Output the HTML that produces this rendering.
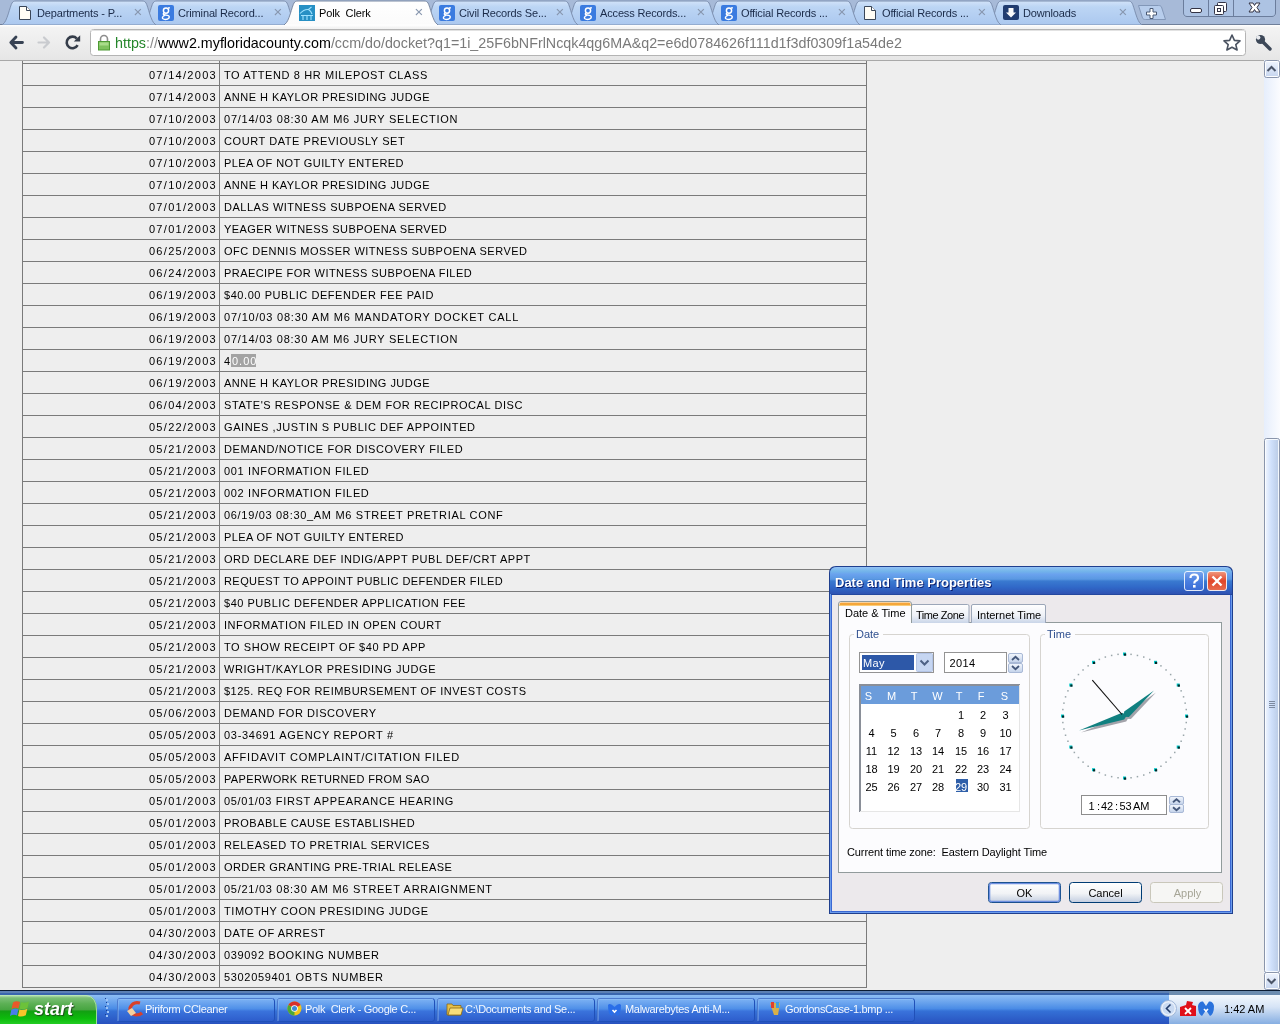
<!DOCTYPE html><html><head><meta charset="utf-8"><style>*{margin:0;padding:0;box-sizing:border-box}
html,body{-webkit-font-smoothing:antialiased;width:1280px;height:1024px;overflow:hidden;background:#eee;font-family:"Liberation Sans",sans-serif;position:relative}
.strip{position:absolute;left:0;top:0}
.fav{position:absolute;top:5px;width:16px;height:16px}
.fav-g{background:#3b7ddd;border-radius:2px}
.fav-g::after{content:"g";position:absolute;left:3px;top:-3px;color:#fff;font:bold 15px "Liberation Serif",serif}
.fav-page{top:6px;left:0;width:12px;height:14px;border:1px solid #3e4a5c;background:#fffdf7;margin-left:3px}
.fav-polk{background:#2a92c6}
.fav-dl{background:#2a4a86;border-radius:2px}
.ttl{position:absolute;top:6px;font-size:11px;color:#1a2a48;white-space:pre;line-height:14px;letter-spacing:-0.15px}
.ttl.act{color:#000}
.tclose{position:absolute;top:4px;width:12px;text-align:center;font-size:15px;line-height:16px;color:#8796ae}
#toolbar{position:absolute;left:0;top:25px;width:1280px;height:36px;background:linear-gradient(#ffffff 0,#f3f3f3 8%,#ececec 60%,#e6e6e6 100%);border-bottom:1px solid #a8a8a8}
#page{position:absolute;left:0;top:61px;width:1264px;height:929px;background:#eeeeee;overflow:hidden}
.hl{position:absolute;left:22px;width:845px;height:1px;background:#7a7a7a}
.vl{position:absolute;top:0;width:1px;height:927px;background:#7a7a7a}
.dt{position:absolute;left:22px;width:195px;text-align:right;font-size:11px;letter-spacing:1.3px;line-height:22px;height:22px;color:#000;padding-top:1px}
.tx{position:absolute;left:224px;font-size:11px;letter-spacing:0.5px;line-height:22px;height:22px;color:#000;white-space:pre;padding-top:1px}
.sel{background:#a3a3a3;color:#fff}
#url{position:absolute;left:115px;top:35px;font-size:14.3px;line-height:17px;color:#000;white-space:pre}
#dlg{position:absolute;left:0;top:0;width:0;height:0}
.dtx{position:absolute;font-size:11px;line-height:13px;color:#000;white-space:pre}
.dttl{position:absolute;font-size:13px;font-weight:bold;line-height:16px;color:#fff;white-space:pre;text-shadow:1px 1px 0 #0a1e6e}
.tbt{position:absolute;top:1002px;font-size:11px;line-height:14px;color:#f4f8ff;white-space:pre;letter-spacing:-0.3px}
.tbs{position:absolute;left:34px;top:999px;font-size:18px;font-weight:bold;font-style:italic;line-height:20px;color:#fff;text-shadow:1px 1px 1px #1d4d1a}
.clk{position:absolute;left:1224px;top:1002px;font-size:11px;line-height:14px;color:#000;white-space:pre}

#page,#dlg,.ttl,#url,.tbt,.clk,.tbs,.tclose{will-change:transform}
</style></head><body>

<svg class="strip" width="1280" height="25" viewBox="0 0 1280 25"><defs><linearGradient id="tabg" x1="0" y1="0" x2="0" y2="1"><stop offset="0" stop-color="#d2e3f9"/><stop offset="0.25" stop-color="#bcd5f4"/><stop offset="1" stop-color="#abc8ef"/></linearGradient><linearGradient id="tabact" x1="0" y1="0" x2="0" y2="1"><stop offset="0" stop-color="#ffffff"/><stop offset="1" stop-color="#fbfbfb"/></linearGradient></defs><rect x="0" y="0" width="1280" height="25" fill="#a7bad8"/><rect x="0" y="24" width="1280" height="1" fill="#6f7f99"/><path d="M988,25 L989,24 C993,22 996,6 998,3 C999,1.5 1000,1 1002,1 L1128,1 C1130,1 1131,1.5 1132,3 C1134,6 1137,22 1141,24 L1142,25 Z" fill="url(#tabg)" stroke="#7d90b0" stroke-width="1"/><path d="M847,25 L848,24 C852,22 855,6 857,3 C858,1.5 859,1 861,1 L987,1 C989,1 990,1.5 991,3 C993,6 996,22 1000,24 L1001,25 Z" fill="url(#tabg)" stroke="#7d90b0" stroke-width="1"/><path d="M706,25 L707,24 C711,22 714,6 716,3 C717,1.5 718,1 720,1 L846,1 C848,1 849,1.5 850,3 C852,6 855,22 859,24 L860,25 Z" fill="url(#tabg)" stroke="#7d90b0" stroke-width="1"/><path d="M565,25 L566,24 C570,22 573,6 575,3 C576,1.5 577,1 579,1 L705,1 C707,1 708,1.5 709,3 C711,6 714,22 718,24 L719,25 Z" fill="url(#tabg)" stroke="#7d90b0" stroke-width="1"/><path d="M424,25 L425,24 C429,22 432,6 434,3 C435,1.5 436,1 438,1 L564,1 C566,1 567,1.5 568,3 C570,6 573,22 577,24 L578,25 Z" fill="url(#tabg)" stroke="#7d90b0" stroke-width="1"/><path d="M143,25 L144,24 C148,22 151,6 153,3 C154,1.5 155,1 157,1 L283,1 C285,1 286,1.5 287,3 C289,6 292,22 296,24 L297,25 Z" fill="url(#tabg)" stroke="#7d90b0" stroke-width="1"/><path d="M2,25 L3,24 C7,22 10,6 12,3 C13,1.5 14,1 16,1 L142,1 C144,1 145,1.5 146,3 C148,6 151,22 155,24 L156,25 Z" fill="url(#tabg)" stroke="#7d90b0" stroke-width="1"/><path d="M284,25 L285,24 C289,22 292,6 294,3 C295,1.5 296,1 298,1 L424,1 C426,1 427,1.5 428,3 C430,6 433,22 437,24 L438,25 Z" fill="url(#tabact)" stroke="#7b8aa3" stroke-width="1"/><rect x="285" y="24" width="152" height="2" fill="#fdfdfd"/><path d="M1138.5,5.5 L1158.5,5.5 C1160,5.5 1161,6 1161.5,7 L1165.5,19.5 L1145.5,19.5 C1144,19.5 1143,19 1142.5,18 Z" fill="#b7cdec" stroke="#8297b8"/><path d="M1150,8.5 h3 v3.5 h3.5 v3 h-3.5 v3.5 h-3 v-3.5 h-3.5 v-3 h3.5 z" fill="#fff" stroke="#4a5a75" stroke-width="1"/><path d="M1183.5,0 L1183.5,13 C1183.5,15 1185,16.5 1187,16.5 L1272,16.5 C1274,16.5 1275.5,15 1275.5,13 L1275.5,0" fill="#adc3e3" stroke="#6b7d9c"/><rect x="1208" y="0" width="1" height="16" fill="#6b7d9c"/><rect x="1233" y="0" width="1" height="16" fill="#6b7d9c"/><rect x="1190.5" y="8.5" width="11" height="4" rx="1.5" fill="#fff" stroke="#334" stroke-width="1"/><rect x="1217.5" y="2.5" width="9" height="9" rx="1" fill="#fff" stroke="#334"/><rect x="1214.5" y="5.5" width="9" height="9" rx="1" fill="#fff" stroke="#334"/><rect x="1217.5" y="8.5" width="3" height="3" fill="none" stroke="#334"/><path d="M1249,3 L1253,3 L1254.5,5.5 L1256,3 L1260,3 L1257,7.5 L1260,12 L1256,12 L1254.5,9.5 L1253,12 L1249,12 L1252,7.5 Z" fill="#fff" stroke="#334" stroke-width="1"/></svg>
<svg style="position:absolute;left:17px;top:5px" width="16" height="16" viewBox="0 0 16 16"><path d="M2.5,1.5 L9.5,1.5 L13.5,5.5 L13.5,14.5 L2.5,14.5 Z" fill="#fffdf6" stroke="#3a4658"/><path d="M9.5,1.5 L9.5,5.5 L13.5,5.5" fill="#fff" stroke="#3a4658"/></svg>
<div class="ttl" style="left:37px">Departments - P...</div>
<div class="tclose" style="left:132px">&#215;</div>
<svg style="position:absolute;left:158px;top:5px" width="16" height="16" viewBox="0 0 16 16"><rect x="0" y="0" width="16" height="16" rx="2" fill="#3a7be0"/><ellipse cx="8" cy="5.6" rx="2.6" ry="2.6" fill="none" stroke="#fff" stroke-width="1.5"/><path d="M10,2.8 L12,2.8" stroke="#fff" stroke-width="1.2"/><path d="M6.2,7.8 Q4.5,9 6,9.8 L9.5,10.4 Q12,11 11,13 Q9.5,14.8 6.5,14.4 Q4,14 4.5,12.2 Q5,11 7,10.4" fill="none" stroke="#fff" stroke-width="1.4"/></svg>
<div class="ttl" style="left:178px">Criminal Record...</div>
<div class="tclose" style="left:272px">&#215;</div>
<svg style="position:absolute;left:299px;top:5px" width="16" height="16" viewBox="0 0 16 16"><rect x="0" y="0" width="16" height="16" fill="#2790c4"/><path d="M1,8.5 Q5,4 9.5,4.5 L12.5,2 M9.5,4.5 Q12,6 13,9 M2,10.5 L14,10.5 M4,11 L4,15 M8,11 L8,15 M12,11 L12,15" fill="none" stroke="#9fe2ff" stroke-width="1.1"/></svg>
<div class="ttl act" style="left:319px">Polk  Clerk</div>
<div class="tclose" style="left:413px">&#215;</div>
<svg style="position:absolute;left:439px;top:5px" width="16" height="16" viewBox="0 0 16 16"><rect x="0" y="0" width="16" height="16" rx="2" fill="#3a7be0"/><ellipse cx="8" cy="5.6" rx="2.6" ry="2.6" fill="none" stroke="#fff" stroke-width="1.5"/><path d="M10,2.8 L12,2.8" stroke="#fff" stroke-width="1.2"/><path d="M6.2,7.8 Q4.5,9 6,9.8 L9.5,10.4 Q12,11 11,13 Q9.5,14.8 6.5,14.4 Q4,14 4.5,12.2 Q5,11 7,10.4" fill="none" stroke="#fff" stroke-width="1.4"/></svg>
<div class="ttl" style="left:459px">Civil Records Se...</div>
<div class="tclose" style="left:554px">&#215;</div>
<svg style="position:absolute;left:580px;top:5px" width="16" height="16" viewBox="0 0 16 16"><rect x="0" y="0" width="16" height="16" rx="2" fill="#3a7be0"/><ellipse cx="8" cy="5.6" rx="2.6" ry="2.6" fill="none" stroke="#fff" stroke-width="1.5"/><path d="M10,2.8 L12,2.8" stroke="#fff" stroke-width="1.2"/><path d="M6.2,7.8 Q4.5,9 6,9.8 L9.5,10.4 Q12,11 11,13 Q9.5,14.8 6.5,14.4 Q4,14 4.5,12.2 Q5,11 7,10.4" fill="none" stroke="#fff" stroke-width="1.4"/></svg>
<div class="ttl" style="left:600px">Access Records...</div>
<div class="tclose" style="left:695px">&#215;</div>
<svg style="position:absolute;left:721px;top:5px" width="16" height="16" viewBox="0 0 16 16"><rect x="0" y="0" width="16" height="16" rx="2" fill="#3a7be0"/><ellipse cx="8" cy="5.6" rx="2.6" ry="2.6" fill="none" stroke="#fff" stroke-width="1.5"/><path d="M10,2.8 L12,2.8" stroke="#fff" stroke-width="1.2"/><path d="M6.2,7.8 Q4.5,9 6,9.8 L9.5,10.4 Q12,11 11,13 Q9.5,14.8 6.5,14.4 Q4,14 4.5,12.2 Q5,11 7,10.4" fill="none" stroke="#fff" stroke-width="1.4"/></svg>
<div class="ttl" style="left:741px">Official Records ...</div>
<div class="tclose" style="left:836px">&#215;</div>
<svg style="position:absolute;left:862px;top:5px" width="16" height="16" viewBox="0 0 16 16"><path d="M2.5,1.5 L9.5,1.5 L13.5,5.5 L13.5,14.5 L2.5,14.5 Z" fill="#fffdf6" stroke="#3a4658"/><path d="M9.5,1.5 L9.5,5.5 L13.5,5.5" fill="#fff" stroke="#3a4658"/></svg>
<div class="ttl" style="left:882px">Official Records ...</div>
<div class="tclose" style="left:976px">&#215;</div>
<svg style="position:absolute;left:1003px;top:5px" width="16" height="16" viewBox="0 0 16 16"><rect x="0" y="0" width="16" height="15" rx="2" fill="#203c70"/><path d="M5.5,3 L10.5,3 L10.5,7.5 L13,7.5 L8,12.5 L3,7.5 L5.5,7.5 Z" fill="#fafafa"/></svg>
<div class="ttl" style="left:1023px">Downloads</div>
<div class="tclose" style="left:1117px">&#215;</div>
<div id="toolbar"></div>
<svg style="position:absolute;left:0;top:25px" width="1280" height="36" viewBox="0 25 1280 36">
<!-- back -->
<path d="M16,37 L10.8,42.5 L16,48 M11,42.5 L22.5,42.5" fill="none" stroke="#374253" stroke-width="2.8" stroke-linecap="round" stroke-linejoin="round"/>
<!-- forward -->
<path d="M44,37.5 L49,42.5 L44,47.5 M38.5,42.5 L48.5,42.5" fill="none" stroke="#c9cbcf" stroke-width="2.2" stroke-linecap="round" stroke-linejoin="round"/>
<!-- reload -->
<path d="M77.6,45.2 A5.8,5.8 0 1 1 76.8,38.6" fill="none" stroke="#353d4a" stroke-width="2.6"/>
<path d="M73.8,41.6 L80.2,41.6 L80.2,35.2 Z" fill="#353d4a"/>
<!-- omnibox -->
<rect x="90.5" y="29.5" width="1155" height="26" rx="3" ry="3" fill="#fff" stroke="#b4b4b4"/>
<rect x="91" y="30" width="1154" height="1" fill="#e2e2e2"/>
<!-- lock -->
<path d="M100.5,42 L100.5,39 A3.5,3.5 0 0 1 107.5,39 L107.5,42" fill="none" stroke="#8d8d8d" stroke-width="1.6"/>
<rect x="98.5" y="41.5" width="11" height="8.5" fill="#7fc25e" stroke="#4e9a34"/>
<rect x="99.5" y="42.5" width="9" height="3" fill="#a9dc8a"/>
<!-- star -->
<path d="M1232,35 L1234.4,40.4 L1240,40.9 L1235.8,44.6 L1237.1,50 L1232,47.2 L1226.9,50 L1228.2,44.6 L1224,40.9 L1229.6,40.4 Z" fill="#fff" stroke="#4a5260" stroke-width="1.6" stroke-linejoin="round"/>
<!-- wrench -->
<path d="M1270,49 L1262.5,41.5" stroke="#3d4858" stroke-width="3.4" stroke-linecap="round"/>
<circle cx="1260.5" cy="39.5" r="4.6" fill="#3d4858"/>
<circle cx="1258.3" cy="37.6" r="2.1" fill="#e8eaee"/>
</svg>
<div id="url"><span style="color:#24862a">https</span><span style="color:#8a8a8a">://</span>www2.myfloridacounty.com<span style="color:#7a7a7a">/ccm/do/docket?q1=1i_25F6bNFrlNcqk4qg6MA&amp;q2=e6d0784626f111d1f3df0309f1a54de2</span></div>

<div id="page"><div class="hl" style="top:2px"></div><div class="hl" style="top:24px"></div><div class="hl" style="top:46px"></div><div class="hl" style="top:68px"></div><div class="hl" style="top:90px"></div><div class="hl" style="top:112px"></div><div class="hl" style="top:134px"></div><div class="hl" style="top:156px"></div><div class="hl" style="top:178px"></div><div class="hl" style="top:200px"></div><div class="hl" style="top:222px"></div><div class="hl" style="top:244px"></div><div class="hl" style="top:266px"></div><div class="hl" style="top:288px"></div><div class="hl" style="top:310px"></div><div class="hl" style="top:332px"></div><div class="hl" style="top:354px"></div><div class="hl" style="top:376px"></div><div class="hl" style="top:398px"></div><div class="hl" style="top:420px"></div><div class="hl" style="top:442px"></div><div class="hl" style="top:464px"></div><div class="hl" style="top:486px"></div><div class="hl" style="top:508px"></div><div class="hl" style="top:530px"></div><div class="hl" style="top:552px"></div><div class="hl" style="top:574px"></div><div class="hl" style="top:596px"></div><div class="hl" style="top:618px"></div><div class="hl" style="top:640px"></div><div class="hl" style="top:662px"></div><div class="hl" style="top:684px"></div><div class="hl" style="top:706px"></div><div class="hl" style="top:728px"></div><div class="hl" style="top:750px"></div><div class="hl" style="top:772px"></div><div class="hl" style="top:794px"></div><div class="hl" style="top:816px"></div><div class="hl" style="top:838px"></div><div class="hl" style="top:860px"></div><div class="hl" style="top:882px"></div><div class="hl" style="top:904px"></div><div class="hl" style="top:926px"></div><div class="vl" style="left:22px"></div><div class="vl" style="left:219px"></div><div class="vl" style="left:866px"></div><div class="dt" style="top:2px">07/14/2003</div><div class="tx" style="top:2px;letter-spacing:0.6px">TO ATTEND 8 HR MILEPOST CLASS</div><div class="dt" style="top:24px">07/14/2003</div><div class="tx" style="top:24px;letter-spacing:0.472px">ANNE H KAYLOR PRESIDING JUDGE</div><div class="dt" style="top:46px">07/10/2003</div><div class="tx" style="top:46px;letter-spacing:0.765px">07/14/03 08:30 AM M6 JURY SELECTION</div><div class="dt" style="top:68px">07/10/2003</div><div class="tx" style="top:68px;letter-spacing:0.566px">COURT DATE PREVIOUSLY SET</div><div class="dt" style="top:90px">07/10/2003</div><div class="tx" style="top:90px;letter-spacing:0.404px">PLEA OF NOT GUILTY ENTERED</div><div class="dt" style="top:112px">07/10/2003</div><div class="tx" style="top:112px;letter-spacing:0.472px">ANNE H KAYLOR PRESIDING JUDGE</div><div class="dt" style="top:134px">07/01/2003</div><div class="tx" style="top:134px;letter-spacing:0.52px">DALLAS WITNESS SUBPOENA SERVED</div><div class="dt" style="top:156px">07/01/2003</div><div class="tx" style="top:156px;letter-spacing:0.418px">YEAGER WITNESS SUBPOENA SERVED</div><div class="dt" style="top:178px">06/25/2003</div><div class="tx" style="top:178px;letter-spacing:0.49px">OFC DENNIS MOSSER WITNESS SUBPOENA SERVED</div><div class="dt" style="top:200px">06/24/2003</div><div class="tx" style="top:200px;letter-spacing:0.434px">PRAECIPE FOR WITNESS SUBPOENA FILED</div><div class="dt" style="top:222px">06/19/2003</div><div class="tx" style="top:222px;letter-spacing:0.566px">$40.00 PUBLIC DEFENDER FEE PAID</div><div class="dt" style="top:244px">06/19/2003</div><div class="tx" style="top:244px;letter-spacing:0.793px">07/10/03 08:30 AM M6 MANDATORY DOCKET CALL</div><div class="dt" style="top:266px">06/19/2003</div><div class="tx" style="top:266px;letter-spacing:0.765px">07/14/03 08:30 AM M6 JURY SELECTION</div><div class="dt" style="top:288px">06/19/2003</div><div class="tx" style="top:288px">4</div><div style="position:absolute;left:231px;top:293px;width:25px;height:13px;background:#a3a3a3"></div><div class="tx" style="top:288px;left:232px;color:#fff;letter-spacing:1px">0.00</div><div class="dt" style="top:310px">06/19/2003</div><div class="tx" style="top:310px;letter-spacing:0.472px">ANNE H KAYLOR PRESIDING JUDGE</div><div class="dt" style="top:332px">06/04/2003</div><div class="tx" style="top:332px;letter-spacing:0.568px">STATE'S RESPONSE &amp; DEM FOR RECIPROCAL DISC</div><div class="dt" style="top:354px">05/22/2003</div><div class="tx" style="top:354px;letter-spacing:0.571px">GAINES ,JUSTIN S PUBLIC DEF APPOINTED</div><div class="dt" style="top:376px">05/21/2003</div><div class="tx" style="top:376px;letter-spacing:0.575px">DEMAND/NOTICE FOR DISCOVERY FILED</div><div class="dt" style="top:398px">05/21/2003</div><div class="tx" style="top:398px;letter-spacing:0.65px">001 INFORMATION FILED</div><div class="dt" style="top:420px">05/21/2003</div><div class="tx" style="top:420px;letter-spacing:0.65px">002 INFORMATION FILED</div><div class="dt" style="top:442px">05/21/2003</div><div class="tx" style="top:442px;letter-spacing:0.688px">06/19/03 08:30_AM M6 STREET PRETRIAL CONF</div><div class="dt" style="top:464px">05/21/2003</div><div class="tx" style="top:464px;letter-spacing:0.404px">PLEA OF NOT GUILTY ENTERED</div><div class="dt" style="top:486px">05/21/2003</div><div class="tx" style="top:486px;letter-spacing:0.551px">ORD DECLARE DEF INDIG/APPT PUBL DEF/CRT APPT</div><div class="dt" style="top:508px">05/21/2003</div><div class="tx" style="top:508px;letter-spacing:0.428px">REQUEST TO APPOINT PUBLIC DEFENDER FILED</div><div class="dt" style="top:530px">05/21/2003</div><div class="tx" style="top:530px;letter-spacing:0.524px">$40 PUBLIC DEFENDER APPLICATION FEE</div><div class="dt" style="top:552px">05/21/2003</div><div class="tx" style="top:552px;letter-spacing:0.553px">INFORMATION FILED IN OPEN COURT</div><div class="dt" style="top:574px">05/21/2003</div><div class="tx" style="top:574px;letter-spacing:0.571px">TO SHOW RECEIPT OF $40 PD APP</div><div class="dt" style="top:596px">05/21/2003</div><div class="tx" style="top:596px;letter-spacing:0.579px">WRIGHT/KAYLOR PRESIDING JUDGE</div><div class="dt" style="top:618px">05/21/2003</div><div class="tx" style="top:618px;letter-spacing:0.476px">$125. REQ FOR REIMBURSEMENT OF INVEST COSTS</div><div class="dt" style="top:640px">05/06/2003</div><div class="tx" style="top:640px;letter-spacing:0.552px">DEMAND FOR DISCOVERY</div><div class="dt" style="top:662px">05/05/2003</div><div class="tx" style="top:662px;letter-spacing:0.708px">03-34691 AGENCY REPORT #</div><div class="dt" style="top:684px">05/05/2003</div><div class="tx" style="top:684px;letter-spacing:0.779px">AFFIDAVIT COMPLAINT/CITATION FILED</div><div class="dt" style="top:706px">05/05/2003</div><div class="tx" style="top:706px;letter-spacing:0.339px">PAPERWORK RETURNED FROM SAO</div><div class="dt" style="top:728px">05/01/2003</div><div class="tx" style="top:728px;letter-spacing:0.657px">05/01/03 FIRST APPEARANCE HEARING</div><div class="dt" style="top:750px">05/01/2003</div><div class="tx" style="top:750px;letter-spacing:0.492px">PROBABLE CAUSE ESTABLISHED</div><div class="dt" style="top:772px">05/01/2003</div><div class="tx" style="top:772px;letter-spacing:0.492px">RELEASED TO PRETRIAL SERVICES</div><div class="dt" style="top:794px">05/01/2003</div><div class="tx" style="top:794px;letter-spacing:0.422px">ORDER GRANTING PRE-TRIAL RELEASE</div><div class="dt" style="top:816px">05/01/2003</div><div class="tx" style="top:816px;letter-spacing:0.721px">05/21/03 08:30 AM M6 STREET ARRAIGNMENT</div><div class="dt" style="top:838px">05/01/2003</div><div class="tx" style="top:838px;letter-spacing:0.553px">TIMOTHY COON PRESIDING JUDGE</div><div class="dt" style="top:860px">04/30/2003</div><div class="tx" style="top:860px;letter-spacing:0.547px">DATE OF ARREST</div><div class="dt" style="top:882px">04/30/2003</div><div class="tx" style="top:882px;letter-spacing:0.66px">039092 BOOKING NUMBER</div><div class="dt" style="top:904px">04/30/2003</div><div class="tx" style="top:904px;letter-spacing:0.672px">5302059401 OBTS NUMBER</div></div>
<svg style="position:absolute;left:1264px;top:60px" width="16" height="930" viewBox="1264 60 16 930">
<defs>
<linearGradient id="trk" x1="0" y1="0" x2="1" y2="0"><stop offset="0" stop-color="#e6eefc"/><stop offset="1" stop-color="#fbfcff"/></linearGradient>
<linearGradient id="thm" x1="0" y1="0" x2="1" y2="0"><stop offset="0" stop-color="#f4f8ff"/><stop offset="0.45" stop-color="#cfe0fb"/><stop offset="1" stop-color="#b8c9e3"/></linearGradient>
<linearGradient id="btn" x1="0" y1="0" x2="0" y2="1"><stop offset="0" stop-color="#f0f5fe"/><stop offset="1" stop-color="#c5d4ee"/></linearGradient>
</defs>
<rect x="1264" y="60" width="16" height="930" fill="url(#trk)"/>
<rect x="1264.5" y="60.5" width="15" height="17" rx="2" fill="url(#btn)" stroke="#8a95ab"/>
<rect x="1265.5" y="61.5" width="13" height="15" rx="1" fill="none" stroke="#fdfeff"/>
<path d="M1267.5,71 L1271.5,67 L1275.5,71" fill="none" stroke="#4b5568" stroke-width="2"/>
<rect x="1264.5" y="438.5" width="15" height="534" rx="2" fill="url(#thm)" stroke="#8a95ab"/>
<rect x="1265.5" y="439.5" width="13" height="532" rx="1" fill="none" stroke="#fbfdff" stroke-opacity="0.9"/>
<g fill="#7d8aa0"><rect x="1269" y="701" width="6" height="1"/><rect x="1269" y="703" width="6" height="1"/><rect x="1269" y="705" width="6" height="1"/><rect x="1269" y="707" width="6" height="1"/></g>
<rect x="1264.5" y="972.5" width="15" height="17" rx="2" fill="url(#btn)" stroke="#8a95ab"/>
<rect x="1265.5" y="973.5" width="13" height="15" rx="1" fill="none" stroke="#fdfeff"/>
<path d="M1267.5,979 L1271.5,983 L1275.5,979" fill="none" stroke="#4b5568" stroke-width="2"/>
</svg>

<div id="dlg">
<svg style="position:absolute;left:0;top:0" width="1280" height="1024" viewBox="0 0 1280 1024"><defs>
<linearGradient id="ttlg" x1="0" y1="0" x2="0" y2="1">
<stop offset="0" stop-color="#94c2f6"/><stop offset="0.15" stop-color="#74b6ea"/><stop offset="0.27" stop-color="#6aa2ee"/><stop offset="0.45" stop-color="#5a98e2"/><stop offset="0.52" stop-color="#3a7ad0"/><stop offset="0.75" stop-color="#3068c8"/><stop offset="1" stop-color="#2f52b2"/></linearGradient>
<linearGradient id="hbtn" x1="0" y1="0" x2="0" y2="1"><stop offset="0" stop-color="#7aa6ee"/><stop offset="0.5" stop-color="#4a7fe0"/><stop offset="1" stop-color="#3a6bd4"/></linearGradient>
<linearGradient id="cbtn" x1="0" y1="0" x2="0" y2="1"><stop offset="0" stop-color="#f09a80"/><stop offset="0.5" stop-color="#e1462a"/><stop offset="1" stop-color="#e86d50"/></linearGradient>
<linearGradient id="xtab" x1="0" y1="0" x2="0" y2="1"><stop offset="0" stop-color="#ffffff"/><stop offset="0.6" stop-color="#eef1f7"/><stop offset="1" stop-color="#c9d5e8"/></linearGradient>
<linearGradient id="xbtn" x1="0" y1="0" x2="0" y2="1"><stop offset="0" stop-color="#ffffff"/><stop offset="0.55" stop-color="#f1f3f6"/><stop offset="1" stop-color="#c2cde0"/></linearGradient>
<linearGradient id="sbtn" x1="0" y1="0" x2="0" y2="1"><stop offset="0" stop-color="#f3f7fd"/><stop offset="1" stop-color="#c3d2ea"/></linearGradient>
</defs><path d="M829,914 L829,573 Q829,566 836,566 L1226,566 Q1233,566 1233,573 L1233,914 Z" fill="#1f3f8e"/><path d="M830,913 L830,574 Q830,567 837,567 L1225,567 Q1232,567 1232,574 L1232,913 Z" fill="#6b9cec"/><path d="M831,912 L831,575 Q831,568 838,568 L1224,568 Q1231,568 1231,575 L1231,912 Z" fill="#3a68d4"/><path d="M830,594 L830,574 Q830,567 837,567 L1225,567 Q1232,567 1232,574 L1232,594 Z" fill="url(#ttlg)"/><rect x="831" y="594" width="401" height="1" fill="#24479e"/><rect x="832" y="595" width="398" height="316" fill="#ece9ec"/><rect x="1184.5" y="571.5" width="19" height="19" rx="2.5" fill="url(#hbtn)" stroke="#ffffff" stroke-opacity="0.85"/><path d="M1190.5,578 Q1190.5,574.5 1194.2,574.5 Q1198,574.5 1198,577.8 Q1198,580 1195.5,581 Q1194.3,581.6 1194.3,583.5" fill="none" stroke="#fff" stroke-width="2.2"/><rect x="1193" y="585" width="2.6" height="2.6" fill="#fff"/><rect x="1207.5" y="571.5" width="19" height="19" rx="2.5" fill="url(#cbtn)" stroke="#ffffff" stroke-opacity="0.85"/><path d="M1212.5,576.5 L1221.5,585.5 M1221.5,576.5 L1212.5,585.5" stroke="#fff" stroke-width="2.4"/><rect x="838.5" y="622.5" width="383" height="250" fill="#fcfcfe" stroke="#919b9c"/><path d="M911.5,623 L911.5,606 Q911.5,604.5 913,604.5 L967.5,604.5 Q969,604.5 969,606 L969,623" fill="url(#xtab)" stroke="#9ba6b8"/><path d="M971.5,623 L971.5,606 Q971.5,604.5 973,604.5 L1044,604.5 Q1045.5,604.5 1045.5,606 L1045.5,623" fill="url(#xtab)" stroke="#9ba6b8"/><path d="M838.5,623 L838.5,604 Q838.5,601.5 841,601.5 L909,601.5 Q911.5,601.5 911.5,604 L911.5,623" fill="#fcfcfe" stroke="#919b9c"/><path d="M839.5,604 Q839.5,602.5 841,602.5 L909,602.5 Q910.5,602.5 910.5,604 L910.5,605 L839.5,605 Z" fill="#f5a63a"/><rect x="839" y="605" width="72" height="1" fill="#f9cc79"/><rect x="839" y="622" width="72" height="2" fill="#fcfcfe"/><rect x="849.5" y="634.5" width="180" height="194" rx="3" fill="none" stroke="#d6d4d0"/><rect x="854" y="628" width="29" height="12" fill="#fcfcfe"/><rect x="1040.5" y="634.5" width="168" height="194" rx="3" fill="none" stroke="#d6d4d0"/><rect x="1045" y="628" width="30" height="12" fill="#fcfcfe"/><rect x="859.5" y="652.5" width="74" height="20" fill="#fff" stroke="#939393"/><rect x="862" y="655" width="52" height="15" fill="#2d58a8"/><rect x="916.5" y="653.5" width="16" height="18" rx="1" fill="#c6d6f2" stroke="#b3c4e6"/><path d="M920.5,660.5 L924.5,664.5 L928.5,660.5" fill="none" stroke="#4d6185" stroke-width="2"/><rect x="944.5" y="652.5" width="62" height="20" fill="#fff" stroke="#939393"/><rect x="1008.5" y="653.5" width="14" height="9" rx="1.5" fill="url(#sbtn)" stroke="#a9b9d6"/><rect x="1008.5" y="663.5" width="14" height="9" rx="1.5" fill="url(#sbtn)" stroke="#a9b9d6"/><path d="M1012,660 L1015.5,656.8 L1019,660" fill="none" stroke="#44577a" stroke-width="1.8"/><path d="M1012,666 L1015.5,669.2 L1019,666" fill="none" stroke="#44577a" stroke-width="1.8"/><rect x="860" y="685" width="160" height="127" fill="#fff"/><rect x="860" y="684" width="160" height="2" fill="#8a8f98"/><rect x="859" y="684" width="2" height="128" fill="#8a8f98"/><rect x="861" y="686" width="158" height="18" fill="#6b9cdb"/><rect x="1019" y="685" width="1" height="127" fill="#e6e6e6"/><rect x="860" y="811" width="160" height="1" fill="#e6e6e6"/><rect x="956" y="779" width="12" height="13" fill="#2f5fa9"/><rect x="1123.0" y="652.5" width="3" height="3" fill="#00c8c8"/><rect x="1124.0" y="653.5" width="2.2" height="2.2" fill="#002a2a"/><rect x="1130.3" y="653.6" width="1.5" height="1.5" fill="#9aa6aa"/><rect x="1136.7" y="654.7" width="1.5" height="1.5" fill="#9aa6aa"/><rect x="1143.0" y="656.3" width="1.5" height="1.5" fill="#9aa6aa"/><rect x="1149.0" y="658.7" width="1.5" height="1.5" fill="#9aa6aa"/><rect x="1154.0" y="660.8" width="3" height="3" fill="#00c8c8"/><rect x="1155.0" y="661.8" width="2.2" height="2.2" fill="#002a2a"/><rect x="1160.2" y="665.1" width="1.5" height="1.5" fill="#9aa6aa"/><rect x="1165.3" y="669.2" width="1.5" height="1.5" fill="#9aa6aa"/><rect x="1169.9" y="673.8" width="1.5" height="1.5" fill="#9aa6aa"/><rect x="1174.0" y="678.9" width="1.5" height="1.5" fill="#9aa6aa"/><rect x="1176.7" y="683.5" width="3" height="3" fill="#00c8c8"/><rect x="1177.7" y="684.5" width="2.2" height="2.2" fill="#002a2a"/><rect x="1180.4" y="690.1" width="1.5" height="1.5" fill="#9aa6aa"/><rect x="1182.8" y="696.1" width="1.5" height="1.5" fill="#9aa6aa"/><rect x="1184.4" y="702.4" width="1.5" height="1.5" fill="#9aa6aa"/><rect x="1185.5" y="708.8" width="1.5" height="1.5" fill="#9aa6aa"/><rect x="1185.0" y="714.5" width="3" height="3" fill="#00c8c8"/><rect x="1186.0" y="715.5" width="2.2" height="2.2" fill="#002a2a"/><rect x="1185.5" y="721.8" width="1.5" height="1.5" fill="#9aa6aa"/><rect x="1184.4" y="728.2" width="1.5" height="1.5" fill="#9aa6aa"/><rect x="1182.8" y="734.5" width="1.5" height="1.5" fill="#9aa6aa"/><rect x="1180.4" y="740.5" width="1.5" height="1.5" fill="#9aa6aa"/><rect x="1176.7" y="745.5" width="3" height="3" fill="#00c8c8"/><rect x="1177.7" y="746.5" width="2.2" height="2.2" fill="#002a2a"/><rect x="1174.0" y="751.7" width="1.5" height="1.5" fill="#9aa6aa"/><rect x="1169.9" y="756.8" width="1.5" height="1.5" fill="#9aa6aa"/><rect x="1165.3" y="761.4" width="1.5" height="1.5" fill="#9aa6aa"/><rect x="1160.2" y="765.5" width="1.5" height="1.5" fill="#9aa6aa"/><rect x="1154.0" y="768.2" width="3" height="3" fill="#00c8c8"/><rect x="1155.0" y="769.2" width="2.2" height="2.2" fill="#002a2a"/><rect x="1149.0" y="771.9" width="1.5" height="1.5" fill="#9aa6aa"/><rect x="1143.0" y="774.3" width="1.5" height="1.5" fill="#9aa6aa"/><rect x="1136.7" y="775.9" width="1.5" height="1.5" fill="#9aa6aa"/><rect x="1130.3" y="777.0" width="1.5" height="1.5" fill="#9aa6aa"/><rect x="1123.0" y="776.5" width="3" height="3" fill="#00c8c8"/><rect x="1124.0" y="777.5" width="2.2" height="2.2" fill="#002a2a"/><rect x="1117.3" y="777.0" width="1.5" height="1.5" fill="#9aa6aa"/><rect x="1110.9" y="775.9" width="1.5" height="1.5" fill="#9aa6aa"/><rect x="1104.6" y="774.3" width="1.5" height="1.5" fill="#9aa6aa"/><rect x="1098.6" y="771.9" width="1.5" height="1.5" fill="#9aa6aa"/><rect x="1092.0" y="768.2" width="3" height="3" fill="#00c8c8"/><rect x="1093.0" y="769.2" width="2.2" height="2.2" fill="#002a2a"/><rect x="1087.4" y="765.5" width="1.5" height="1.5" fill="#9aa6aa"/><rect x="1082.3" y="761.4" width="1.5" height="1.5" fill="#9aa6aa"/><rect x="1077.7" y="756.8" width="1.5" height="1.5" fill="#9aa6aa"/><rect x="1073.6" y="751.7" width="1.5" height="1.5" fill="#9aa6aa"/><rect x="1069.3" y="745.5" width="3" height="3" fill="#00c8c8"/><rect x="1070.3" y="746.5" width="2.2" height="2.2" fill="#002a2a"/><rect x="1067.2" y="740.5" width="1.5" height="1.5" fill="#9aa6aa"/><rect x="1064.8" y="734.5" width="1.5" height="1.5" fill="#9aa6aa"/><rect x="1063.2" y="728.2" width="1.5" height="1.5" fill="#9aa6aa"/><rect x="1062.1" y="721.8" width="1.5" height="1.5" fill="#9aa6aa"/><rect x="1061.0" y="714.5" width="3" height="3" fill="#00c8c8"/><rect x="1062.0" y="715.5" width="2.2" height="2.2" fill="#002a2a"/><rect x="1062.1" y="708.8" width="1.5" height="1.5" fill="#9aa6aa"/><rect x="1063.2" y="702.4" width="1.5" height="1.5" fill="#9aa6aa"/><rect x="1064.8" y="696.1" width="1.5" height="1.5" fill="#9aa6aa"/><rect x="1067.2" y="690.1" width="1.5" height="1.5" fill="#9aa6aa"/><rect x="1069.3" y="683.5" width="3" height="3" fill="#00c8c8"/><rect x="1070.3" y="684.5" width="2.2" height="2.2" fill="#002a2a"/><rect x="1073.6" y="678.9" width="1.5" height="1.5" fill="#9aa6aa"/><rect x="1077.7" y="673.8" width="1.5" height="1.5" fill="#9aa6aa"/><rect x="1082.3" y="669.2" width="1.5" height="1.5" fill="#9aa6aa"/><rect x="1087.4" y="665.1" width="1.5" height="1.5" fill="#9aa6aa"/><rect x="1092.0" y="660.8" width="3" height="3" fill="#00c8c8"/><rect x="1093.0" y="661.8" width="2.2" height="2.2" fill="#002a2a"/><rect x="1098.6" y="658.7" width="1.5" height="1.5" fill="#9aa6aa"/><rect x="1104.6" y="656.3" width="1.5" height="1.5" fill="#9aa6aa"/><rect x="1110.9" y="654.7" width="1.5" height="1.5" fill="#9aa6aa"/><rect x="1117.3" y="653.6" width="1.5" height="1.5" fill="#9aa6aa"/><path d="M1156.0,692.5 L1130.9,718.9 L1125.5,718.8 L1126.2,713.5 Z" fill="#a3a3aa"/><path d="M1081.0,732.5 L1124.0,714.7 L1128.9,716.9 L1126.2,721.5 Z" fill="#a3a3aa"/><path d="M1154.0,690.5 L1128.9,716.9 L1123.5,716.8 L1124.2,711.5 Z" fill="#108080"/><path d="M1079.0,730.5 L1122.0,712.7 L1126.9,714.9 L1124.2,719.5 Z" fill="#108080"/><line x1="1122" y1="714.5" x2="1092.3" y2="680.2" stroke="#111" stroke-width="1.1"/><rect x="1081.5" y="795.5" width="85" height="19" fill="#fff" stroke="#8d8d8d"/><rect x="1169.5" y="796.5" width="14" height="8" rx="1.5" fill="url(#sbtn)" stroke="#a9b9d6"/><rect x="1169.5" y="804.5" width="14" height="8" rx="1.5" fill="url(#sbtn)" stroke="#a9b9d6"/><path d="M1173,802.3 L1176.5,799.3 L1180,802.3" fill="none" stroke="#44577a" stroke-width="1.8"/><path d="M1173,807.2 L1176.5,810.2 L1180,807.2" fill="none" stroke="#44577a" stroke-width="1.8"/><rect x="988.5" y="882.5" width="72" height="20" rx="3" fill="url(#xbtn)" stroke="#003c74"/><rect x="989.5" y="883.5" width="70" height="18" rx="2" fill="none" stroke="#6d8fe0" stroke-width="1.6"/><rect x="1069.5" y="882.5" width="72" height="20" rx="3" fill="url(#xbtn)" stroke="#003c74"/><rect x="1150.5" y="882.5" width="72" height="20" rx="3" fill="#f6f6f4" stroke="#c9c7ba"/></svg>
<div class="dttl" style="left:835px;top:574.5px;">Date and Time Properties</div>
<div class="dtx" style="left:845px;top:607px;">Date &amp; Time</div>
<div class="dtx" style="left:916px;top:609px;;letter-spacing:-0.45px">Time Zone</div>
<div class="dtx" style="left:977px;top:609px;">Internet Time</div>
<div class="dtx" style="left:856px;top:628px;;color:#2f4f8f">Date</div>
<div class="dtx" style="left:1047px;top:628px;;color:#2f4f8f">Time</div>
<div class="dtx" style="left:863px;top:657px;;color:#fff;letter-spacing:0.3px">May</div>
<div class="dtx" style="left:949.5px;top:657px;;letter-spacing:0.4px">2014</div>
<div class="dtx" style="left:858.5px;top:689.5px;;color:#fff;width:20px;text-align:center">S</div>
<div class="dtx" style="left:881.5px;top:689.5px;;color:#fff;width:20px;text-align:center">M</div>
<div class="dtx" style="left:904px;top:689.5px;;color:#fff;width:20px;text-align:center">T</div>
<div class="dtx" style="left:927.5px;top:689.5px;;color:#fff;width:20px;text-align:center">W</div>
<div class="dtx" style="left:949px;top:689.5px;;color:#fff;width:20px;text-align:center">T</div>
<div class="dtx" style="left:971px;top:689.5px;;color:#fff;width:20px;text-align:center">F</div>
<div class="dtx" style="left:994.5px;top:689.5px;;color:#fff;width:20px;text-align:center">S</div>
<div class="dtx" style="left:951px;top:708.5px;;color:#000;width:20px;text-align:center">1</div>
<div class="dtx" style="left:973px;top:708.5px;;color:#000;width:20px;text-align:center">2</div>
<div class="dtx" style="left:995.5px;top:708.5px;;color:#000;width:20px;text-align:center">3</div>
<div class="dtx" style="left:861.5px;top:726.5px;;color:#000;width:20px;text-align:center">4</div>
<div class="dtx" style="left:883.5px;top:726.5px;;color:#000;width:20px;text-align:center">5</div>
<div class="dtx" style="left:906px;top:726.5px;;color:#000;width:20px;text-align:center">6</div>
<div class="dtx" style="left:928px;top:726.5px;;color:#000;width:20px;text-align:center">7</div>
<div class="dtx" style="left:951px;top:726.5px;;color:#000;width:20px;text-align:center">8</div>
<div class="dtx" style="left:973px;top:726.5px;;color:#000;width:20px;text-align:center">9</div>
<div class="dtx" style="left:995.5px;top:726.5px;;color:#000;width:20px;text-align:center">10</div>
<div class="dtx" style="left:861.5px;top:744.5px;;color:#000;width:20px;text-align:center">11</div>
<div class="dtx" style="left:883.5px;top:744.5px;;color:#000;width:20px;text-align:center">12</div>
<div class="dtx" style="left:906px;top:744.5px;;color:#000;width:20px;text-align:center">13</div>
<div class="dtx" style="left:928px;top:744.5px;;color:#000;width:20px;text-align:center">14</div>
<div class="dtx" style="left:951px;top:744.5px;;color:#000;width:20px;text-align:center">15</div>
<div class="dtx" style="left:973px;top:744.5px;;color:#000;width:20px;text-align:center">16</div>
<div class="dtx" style="left:995.5px;top:744.5px;;color:#000;width:20px;text-align:center">17</div>
<div class="dtx" style="left:861.5px;top:762.5px;;color:#000;width:20px;text-align:center">18</div>
<div class="dtx" style="left:883.5px;top:762.5px;;color:#000;width:20px;text-align:center">19</div>
<div class="dtx" style="left:906px;top:762.5px;;color:#000;width:20px;text-align:center">20</div>
<div class="dtx" style="left:928px;top:762.5px;;color:#000;width:20px;text-align:center">21</div>
<div class="dtx" style="left:951px;top:762.5px;;color:#000;width:20px;text-align:center">22</div>
<div class="dtx" style="left:973px;top:762.5px;;color:#000;width:20px;text-align:center">23</div>
<div class="dtx" style="left:995.5px;top:762.5px;;color:#000;width:20px;text-align:center">24</div>
<div class="dtx" style="left:861.5px;top:780.5px;;color:#000;width:20px;text-align:center">25</div>
<div class="dtx" style="left:883.5px;top:780.5px;;color:#000;width:20px;text-align:center">26</div>
<div class="dtx" style="left:906px;top:780.5px;;color:#000;width:20px;text-align:center">27</div>
<div class="dtx" style="left:928px;top:780.5px;;color:#000;width:20px;text-align:center">28</div>
<div class="dtx" style="left:951px;top:780.5px;;color:#fff;width:20px;text-align:center">29</div>
<div class="dtx" style="left:973px;top:780.5px;;color:#000;width:20px;text-align:center">30</div>
<div class="dtx" style="left:995.5px;top:780.5px;;color:#000;width:20px;text-align:center">31</div>
<div class="dtx" style="left:1088.5px;top:799.5px;">1</div>
<div class="dtx" style="left:1097px;top:799.5px;">:</div>
<div class="dtx" style="left:1101px;top:799.5px;">42</div>
<div class="dtx" style="left:1115px;top:799.5px;">:</div>
<div class="dtx" style="left:1119.5px;top:799.5px;">53</div>
<div class="dtx" style="left:1133px;top:799.5px;">AM</div>
<div class="dtx" style="left:847px;top:846px;;letter-spacing:-0.1px">Current time zone:&nbsp; Eastern Daylight Time</div>
<div class="dtx" style="left:988px;top:887px;;width:73px;text-align:center">OK</div>
<div class="dtx" style="left:1069px;top:887px;;width:73px;text-align:center">Cancel</div>
<div class="dtx" style="left:1151px;top:887px;;width:73px;text-align:center;color:#a6a596">Apply</div>
</div>
<svg style="position:absolute;left:0;top:990px" width="1280" height="34" viewBox="0 990 1280 34"><defs>
<linearGradient id="tb" x1="0" y1="0" x2="0" y2="1">
<stop offset="0" stop-color="#0b1b33"/><stop offset="0.03" stop-color="#0b1b33"/>
<stop offset="0.03" stop-color="#5c80b4"/><stop offset="0.09" stop-color="#5c80b4"/>
<stop offset="0.09" stop-color="#3a66ae"/><stop offset="0.15" stop-color="#3a66ae"/>
<stop offset="0.15" stop-color="#8dbdf4"/><stop offset="0.55" stop-color="#4a8ce6"/>
<stop offset="0.62" stop-color="#3470d6"/><stop offset="1" stop-color="#2852bf"/></linearGradient>
<linearGradient id="tbb" x1="0" y1="0" x2="0" y2="1">
<stop offset="0" stop-color="#7fb4f4"/><stop offset="0.45" stop-color="#4f8fe8"/><stop offset="0.55" stop-color="#3a73dc"/><stop offset="1" stop-color="#2d5ccb"/></linearGradient>
<linearGradient id="st" x1="0" y1="0" x2="0" y2="1">
<stop offset="0" stop-color="#c4e6c0"/><stop offset="0.1" stop-color="#7cc076"/><stop offset="0.3" stop-color="#5cb055"/><stop offset="0.5" stop-color="#48a642"/><stop offset="0.56" stop-color="#12a012"/><stop offset="0.8" stop-color="#0cba0c"/><stop offset="1" stop-color="#22cc22"/></linearGradient>
<linearGradient id="tray" x1="0" y1="0" x2="0" y2="1">
<stop offset="0" stop-color="#0b1b33"/><stop offset="0.03" stop-color="#0b1b33"/>
<stop offset="0.03" stop-color="#6c8cb0"/><stop offset="0.15" stop-color="#6c8cb0"/>
<stop offset="0.15" stop-color="#f2f7fd"/><stop offset="0.5" stop-color="#d6e4f6"/><stop offset="1" stop-color="#86aee2"/></linearGradient>
</defs><rect x="0" y="990" width="1280" height="34" fill="url(#tb)"/><rect x="1169" y="990" width="111" height="34" fill="url(#tray)"/><path d="M0,995 L86,995 Q97,996 97,1010 L97,1024 L0,1024 Z" fill="url(#st)"/><path d="M0,995.5 L86,995.5 Q96.5,996.5 96.5,1010 L96.5,1024" fill="none" stroke="#b8eab4" stroke-opacity="0.8"/><path d="M13,1002.5 Q16,1000.5 20,1002 L18.5,1008.5 Q15,1007 11.5,1009 Z" fill="#e8582a"/><path d="M21,1002.3 Q25,1003.5 29,1001.5 L27.5,1008 Q23.5,1010 19.6,1008.8 Z" fill="#6cc23a"/><path d="M11.3,1009.8 Q15,1007.8 18.4,1009.3 L17,1015.5 Q13.5,1014 10,1016 Z" fill="#4a7de8"/><path d="M19.4,1009.5 Q23.5,1010.8 27.3,1008.8 L25.8,1015.3 Q21.5,1017.3 18,1016 Z" fill="#f7c52a"/><rect x="106" y="999" width="2" height="2" fill="#9ec4f6"/><rect x="105" y="998" width="1" height="1" fill="#1d3f90"/><rect x="107" y="1003" width="2" height="2" fill="#9ec4f6"/><rect x="106" y="1002" width="1" height="1" fill="#1d3f90"/><rect x="106" y="1007" width="2" height="2" fill="#9ec4f6"/><rect x="105" y="1006" width="1" height="1" fill="#1d3f90"/><rect x="107" y="1011" width="2" height="2" fill="#9ec4f6"/><rect x="106" y="1010" width="1" height="1" fill="#1d3f90"/><rect x="106" y="1015" width="2" height="2" fill="#9ec4f6"/><rect x="105" y="1014" width="1" height="1" fill="#1d3f90"/><rect x="117.5" y="998.5" width="157" height="23" rx="2.5" fill="url(#tbb)" stroke="#2050b8"/><path d="M118,1021 L118,1000 Q118,999 120,999 L273,999" fill="none" stroke="#a4ccf8" stroke-opacity="0.7"/><path d="M140,1003 Q133,1001 130,1008 Q129,1014 136,1015 Q140,1015 142,1013" fill="none" stroke="#d8402a" stroke-width="3.2"/><path d="M127,1011 L132,1008 L136,1013 L131,1016 Z" fill="#f4d0a0"/><rect x="277.5" y="998.5" width="157" height="23" rx="2.5" fill="url(#tbb)" stroke="#2050b8"/><path d="M278,1021 L278,1000 Q278,999 280,999 L433,999" fill="none" stroke="#a4ccf8" stroke-opacity="0.7"/><circle cx="294.5" cy="1008.5" r="7" fill="#f2c61c"/><path d="M294.5,1008.5 L288.4,1005.0 A7,7 0 0 1 300.6,1005.0 Z" fill="#d8302a"/><path d="M294.5,1008.5 L288.4,1005.0 A7,7 0 0 0 294.5,1015.5 Z" fill="#4aa83a"/><circle cx="294.5" cy="1008.5" r="3.3" fill="#fff"/><circle cx="294.5" cy="1008.5" r="2.5" fill="#3d8ad8"/><rect x="437.5" y="998.5" width="157" height="23" rx="2.5" fill="url(#tbb)" stroke="#2050b8"/><path d="M438,1021 L438,1000 Q438,999 440,999 L593,999" fill="none" stroke="#a4ccf8" stroke-opacity="0.7"/><path d="M447,1004 L452,1004 L453,1005.5 L461,1005.5 L461,1015 L447,1015 Z" fill="#e6c04a" stroke="#8a6a18" stroke-width="0.8"/><path d="M448,1015 L450,1008 L463,1008 L461,1015 Z" fill="#f8de7a" stroke="#8a6a18" stroke-width="0.8"/><rect x="597.5" y="998.5" width="157" height="23" rx="2.5" fill="url(#tbb)" stroke="#2050b8"/><path d="M598,1021 L598,1000 Q598,999 600,999 L753,999" fill="none" stroke="#a4ccf8" stroke-opacity="0.7"/><path d="M608,1005 Q608,1015 612,1016 L614.5,1011 L617,1016 Q621,1015 621,1005 Q619,1002 614.5,1007 Q610,1002 608,1005 Z" fill="#2a6ee8"/><path d="M612.5,1010 L614.5,1012 L616.5,1010" fill="none" stroke="#fff" stroke-width="1.6"/><rect x="757.5" y="998.5" width="157" height="23" rx="2.5" fill="url(#tbb)" stroke="#2050b8"/><path d="M758,1021 L758,1000 Q758,999 760,999 L913,999" fill="none" stroke="#a4ccf8" stroke-opacity="0.7"/><path d="M770,1003 L774,1015 L778,1015 L780,1003 Z" fill="#d8b04a"/><rect x="771" y="1002" width="3" height="6" fill="#e04030"/><rect x="776" y="1002" width="3" height="6" fill="#40a0e0"/><circle cx="1168.5" cy="1008.5" r="8" fill="#e9f0fa" stroke="#9fb6d8"/><circle cx="1168.5" cy="1008.5" r="6" fill="#c9daf2"/><path d="M1170.5,1004.5 L1166.5,1008.5 L1170.5,1012.5" fill="none" stroke="#223c6a" stroke-width="1.6"/><path d="M1180,1007 L1186,1005 L1187,1001 L1193,1002 L1192,1005 L1196,1006 L1196,1016 L1180,1016 Z" fill="#e0101a"/><path d="M1185,1008 L1191,1014 M1191,1008 L1185,1014" stroke="#fff" stroke-width="1.8"/><path d="M1198,1006 Q1199,1001 1203,1001.5 L1206,1006 L1209,1001.5 Q1213,1001 1214,1006 Q1214,1014 1210,1016 L1206,1010 L1202,1016 Q1198,1014 1198,1006 Z" fill="#2a72dc"/><path d="M1204,1009 L1206,1011 L1208,1009" fill="none" stroke="#fff" stroke-width="1.6"/></svg>
<div class="tbt" style="left:145px">Piriform CCleaner</div>
<div class="tbt" style="left:305px">Polk  Clerk - Google C...</div>
<div class="tbt" style="left:465px">C:\Documents and Se...</div>
<div class="tbt" style="left:625px">Malwarebytes Anti-M...</div>
<div class="tbt" style="left:785px">GordonsCase-1.bmp ...</div>
<div class="tbs">start</div>
<div class="clk">1:42 AM</div>
</body></html>
